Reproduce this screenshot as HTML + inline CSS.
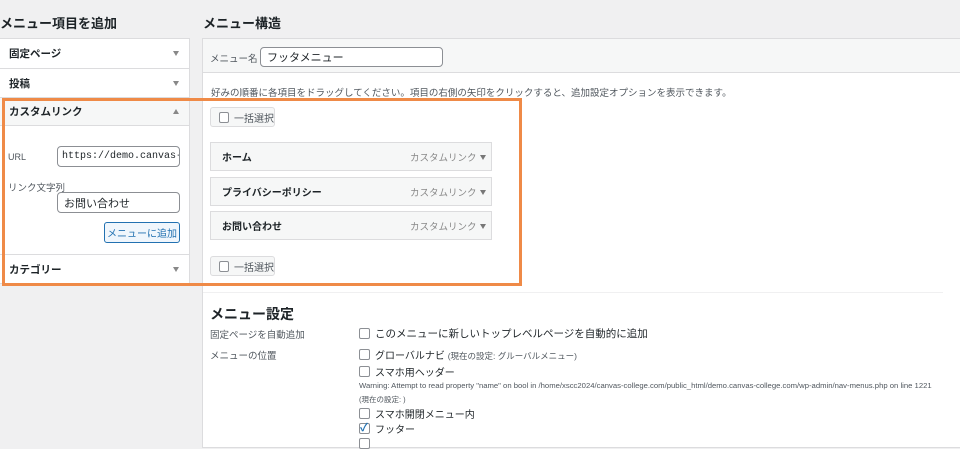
<!DOCTYPE html>
<html><head><meta charset="utf-8"><style>
*{box-sizing:border-box;margin:0;padding:0}
body{width:960px;height:440px;overflow:hidden;background:#f0f0f1;font-family:"Liberation Sans","Noto Sans CJK JP",sans-serif;color:#1d2327;position:relative;font-size:11px}
.a{position:absolute;white-space:nowrap}
.h{font-size:13px;font-weight:bold}
.tri{position:absolute;width:0;height:0;border-left:3px solid transparent;border-right:3px solid transparent;border-top:5px solid #888}
.up{border-top:none;border-bottom:5px solid #888}
.inp{position:absolute;border:1px solid #8c8f94;border-radius:4px;background:#fff;font-size:11px;padding:0 6px;display:flex;align-items:center;white-space:nowrap;overflow:hidden}
.cb{position:absolute;width:11px;height:11px;border:1px solid #8c8f94;border-radius:2px;background:#fff}
.btn{position:absolute;border:1px solid #dcdcde;border-radius:3px;background:#f6f7f7;font-size:10px;color:#50575e;display:flex;align-items:center;padding-left:8px;white-space:nowrap}
.item{position:absolute;left:210px;width:282px;height:29px;border:1px solid #dcdcde;background:#f6f7f7;font-weight:bold;font-size:10px;display:flex;align-items:center;padding-left:11px}
.item span{position:absolute;left:199px;font-weight:normal;color:#888;font-size:9.5px}
.item .tri{left:269px;top:12px;border-top-color:#777}
.g{color:#50575e}
</style></head><body>
<div class="a h" style="left:0;top:13px">メニュー項目を追加</div>
<div class="a h" style="left:203px;top:13px">メニュー構造</div>

<div class="a" style="left:0;top:38px;width:190px;height:246px;background:#fff;border:1px solid #dcdcde;border-left:none"></div>
<div class="a" style="left:0;top:68px;width:189px;border-top:1px solid #dcdcde"></div>
<div class="a" style="left:0;top:97px;width:189px;height:29px;background:#f6f7f7;border-top:1px solid #dcdcde;border-bottom:1px solid #dcdcde"></div>
<div class="a" style="left:0;top:254px;width:189px;border-top:1px solid #dcdcde"></div>
<div class="a" style="left:9px;top:46px;font-weight:bold;font-size:10.5px">固定ページ</div>
<div class="a" style="left:9px;top:76px;font-weight:bold;font-size:10.5px">投稿</div>
<div class="a" style="left:9px;top:104px;font-weight:bold;font-size:10.5px">カスタムリンク</div>
<div class="a" style="left:9px;top:262px;font-weight:bold;font-size:10.5px">カテゴリー</div>
<div class="tri" style="left:173px;top:51px"></div>
<div class="tri" style="left:173px;top:81px"></div>
<div class="tri up" style="left:173px;top:109px"></div>
<div class="tri" style="left:173px;top:267px"></div>
<div class="a g" style="left:8px;top:152px;font-size:9px">URL</div>
<div class="inp" style="left:57px;top:146px;width:123px;height:21px;font-family:'Liberation Mono',monospace;font-size:10px;padding:0 4px">https://demo.canvas-c</div>
<div class="a g" style="left:8px;top:180px;font-size:9.5px">リンク文字列</div>
<div class="inp" style="left:57px;top:192px;width:123px;height:21px">お問い合わせ</div>
<div class="a" style="left:104px;top:222px;width:76px;height:21px;border:1px solid #2271b1;border-radius:3px;background:#f0f6fc;color:#2271b1;font-size:10px;display:flex;align-items:center;justify-content:center">メニューに追加</div>

<div class="a" style="left:202px;top:38px;width:760px;height:410px;background:#fff;border:1px solid #dcdcde"></div>
<div class="a" style="left:203px;top:39px;width:760px;height:34px;background:#f6f7f7;border-bottom:1px solid #dcdcde"></div>
<div class="a g" style="left:210px;top:51px;font-size:9.5px">メニュー名</div>
<div class="inp" style="left:260px;top:47px;width:183px;height:20px">フッタメニュー</div>
<div class="a g" style="left:211px;top:85px;font-size:9.5px">好みの順番に各項目をドラッグしてください。項目の右側の矢印をクリックすると、追加設定オプションを表示できます。</div>
<div class="btn" style="left:210px;top:107px;width:65px;height:20px"><i class="cb" style="position:static;margin-right:5px"></i>一括選択</div>
<div class="item" style="top:142px">ホーム<span>カスタムリンク</span><i class="tri"></i></div>
<div class="item" style="top:177px">プライバシーポリシー<span>カスタムリンク</span><i class="tri"></i></div>
<div class="item" style="top:211px">お問い合わせ<span>カスタムリンク</span><i class="tri"></i></div>
<div class="btn" style="left:210px;top:256px;width:65px;height:20px"><i class="cb" style="position:static;margin-right:5px"></i>一括選択</div>
<div class="a" style="left:203px;top:292px;width:740px;border-top:1px solid #f0f0f1"></div>

<div class="a" style="left:210px;top:304px;font-size:14px;font-weight:bold">メニュー設定</div>
<div class="a g" style="left:210px;top:327px;font-size:9.5px">固定ページを自動追加</div>
<div class="a g" style="left:210px;top:348px;font-size:9.5px">メニューの位置</div>
<div class="cb" style="left:359px;top:328px"></div><div class="a" style="left:375px;top:326px;font-size:10.5px">このメニューに新しいトップレベルページを自動的に追加</div>
<div class="cb" style="left:359px;top:349px"></div><div class="a" style="left:375px;top:347px;font-size:10px">グローバルナビ <span class="g" style="font-size:8.5px">(現在の設定: グルーバルメニュー)</span></div>
<div class="cb" style="left:359px;top:366px"></div><div class="a" style="left:375px;top:364px;font-size:10px">スマホ用ヘッダー</div>
<div class="a g" style="left:359px;top:381px;font-size:7.7px">Warning: Attempt to read property "name" on bool in /home/xscc2024/canvas-college.com/public_html/demo.canvas-college.com/wp-admin/nav-menus.php on line 1221</div>
<div class="a g" style="left:359px;top:394px;font-size:7.5px">(現在の設定: )</div>
<div class="cb" style="left:359px;top:408px"></div><div class="a" style="left:375px;top:406px;font-size:10px">スマホ開閉メニュー内</div>
<div class="cb" style="left:359px;top:423px"></div><div class="a" style="left:360px;top:419px;font-size:11px;color:#2271b1;font-weight:bold">✓</div><div class="a" style="left:375px;top:421px;font-size:10px">フッター</div>
<div class="cb" style="left:359px;top:438px"></div>

<div class="a" style="left:2px;top:98px;width:520px;height:188px;border:3px solid #ef8a47"></div>
</body></html>
